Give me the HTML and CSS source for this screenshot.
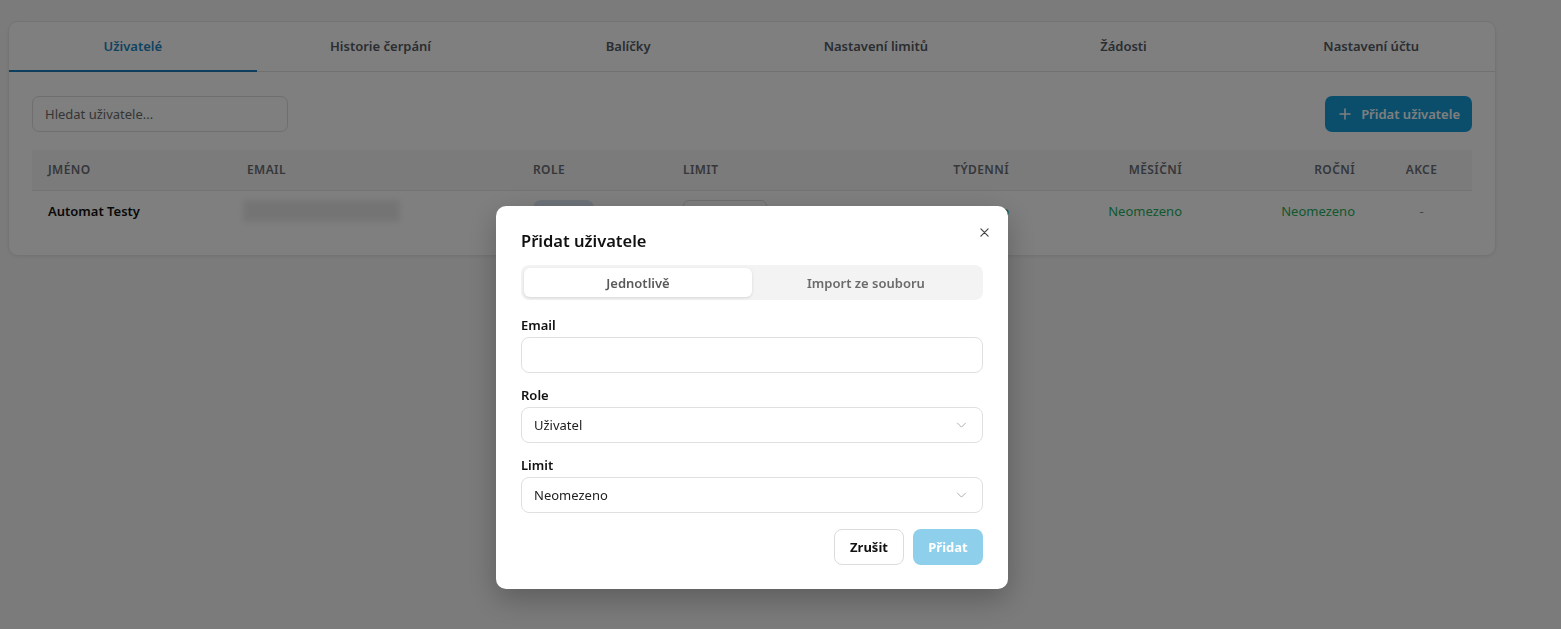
FILE: index.html
```html
<!DOCTYPE html>
<html lang="cs">
<head>
<meta charset="utf-8">
<title>Uživatelé</title>
<link rel="stylesheet" href="styles.css">
</head>
<body>
<div class="page">
  <section class="card">
    <nav class="tabs">
      <a class="tab active">Uživatelé</a>
      <a class="tab">Historie čerpání</a>
      <a class="tab">Balíčky</a>
      <a class="tab">Nastavení limitů</a>
      <a class="tab">Žádosti</a>
      <a class="tab">Nastavení účtu</a>
    </nav>
    <div class="card-body">
      <div class="toolbar">
        <div class="search">Hledat uživatele...</div>
        <button class="btn-primary">
          <svg class="plus" viewBox="0 0 12 12" width="12" height="12"><path d="M6 1v10M1 6h10" stroke="currentColor" stroke-width="1.5" stroke-linecap="round" fill="none"/></svg>
          <span>Přidat uživatele</span>
        </button>
      </div>
      <table class="users">
        <colgroup>
          <col class="c-name"><col class="c-email"><col class="c-role"><col class="c-limit">
          <col class="c-num"><col class="c-num"><col class="c-num"><col class="c-act">
        </colgroup>
        <thead>
          <tr>
            <th>Jméno</th><th>Email</th><th>Role</th><th>Limit</th>
            <th class="r">Týdenní</th><th class="r">Měsíční</th><th class="r">Roční</th><th class="c">Akce</th>
          </tr>
        </thead>
        <tbody>
          <tr>
            <td class="name">Automat Testy</td>
            <td><span class="redacted"></span></td>
            <td><span class="badge">Uživatel</span></td>
            <td><span class="mini-select">Neomezeno</span></td>
            <td class="r ok">Neomezeno</td>
            <td class="r ok">Neomezeno</td>
            <td class="r ok">Neomezeno</td>
            <td class="c dash">-</td>
          </tr>
        </tbody>
      </table>
    </div>
  </section>
</div>

<div class="overlay">
  <div class="modal">
    <div class="modal-head">
      <h2>Přidat uživatele</h2>
      <svg class="close" viewBox="0 0 10 10" width="9" height="9"><path d="M1 1l8 8M9 1l-8 8" stroke="#444" stroke-width="1.3" stroke-linecap="round"/></svg>
    </div>
    <div class="segmented">
      <span class="seg on">Jednotlivě</span>
      <span class="seg">Import ze souboru</span>
    </div>
    <div class="form">
      <div class="field">
        <label>Email</label>
        <div class="control"></div>
      </div>
      <div class="field">
        <label>Role</label>
        <div class="control select">Uživatel
          <svg class="chev" viewBox="0 0 12 7" width="11" height="6"><path d="M1 1l5 5 5-5" stroke="#aaa" stroke-width="1.1" fill="none"/></svg>
        </div>
      </div>
      <div class="field">
        <label>Limit</label>
        <div class="control select">Neomezeno
          <svg class="chev" viewBox="0 0 12 7" width="11" height="6"><path d="M1 1l5 5 5-5" stroke="#aaa" stroke-width="1.1" fill="none"/></svg>
        </div>
      </div>
    </div>
    <div class="actions">
      <button class="btn-ghost">Zrušit</button>
      <button class="btn-disabled">Přidat</button>
    </div>
  </div>
</div>
</body>
</html>
```

FILE: styles.css
```css
* { box-sizing: border-box; }

html, body {
  margin: 0;
  height: 100%;
}

body {
  font-family: "Noto Sans", "Open Sans", sans-serif;
  font-size: 13px;
  color: #111;
  background: #f6f6f6;
}

.page {
  padding: 21px 65px 0 8px;
}

.card {
  background: #fff;
  border: 1px solid #e9e9e9;
  border-radius: 10px;
  box-shadow: 0 1px 3px rgba(0, 0, 0, 0.06);
}

/* tab strip */
.tabs {
  display: grid;
  grid-template-columns: repeat(6, 1fr);
  border-bottom: 1px solid #e2e2e2;
}

.tab {
  height: 50px;
  display: flex;
  align-items: center;
  justify-content: center;
  font-weight: 600;
  font-size: 13px;
  color: #555a63;
  border-bottom: 2px solid transparent;
  margin-bottom: -1px;
}

.tab.active {
  color: #1e86c2;
  border-bottom-color: #1a7db6;
}

.card-body {
  padding: 24px 23px 23px;
}

.toolbar {
  display: flex;
  justify-content: space-between;
  align-items: center;
  margin-bottom: 18px;
}

.search {
  width: 256px;
  height: 36px;
  border: 1px solid #ddd;
  border-radius: 7px;
  padding: 0 12px;
  display: flex;
  align-items: center;
  color: #6b6b6b;
  font-size: 13px;
}

.btn-primary {
  height: 36px;
  padding: 0 12px 0 14px;
  border: none;
  border-radius: 7px;
  background: #169dd9;
  color: #fff;
  font: 600 13px "Noto Sans", "Open Sans", sans-serif;
  white-space: nowrap;
  display: flex;
  align-items: center;
  gap: 10px;
}

/* user table */
.users {
  width: 1440px;
  border-collapse: collapse;
  table-layout: fixed;
}

.c-name { width: 199px; }
.c-email { width: 286px; }
.c-role { width: 150px; }
.c-limit { width: 185px; }
.c-num { width: 173px; }
.c-act { width: 101px; }

.users th {
  height: 40px;
  background: #f7f7f8;
  border-bottom: 1px solid #e6e6e6;
  padding: 0 16px;
  text-align: left;
  font-size: 12px;
  font-weight: 600;
  letter-spacing: 0.4px;
  text-transform: uppercase;
  color: #6b6e75;
}

.users td {
  height: 42px;
  padding: 0 16px;
  vertical-align: middle;
}

.users .r { text-align: right; }
.users .c { text-align: center; }

.name { font-weight: 600; }

.redacted {
  display: block;
  width: 157px;
  height: 22px;
  margin-left: -4px;
  background: #e9e9e9;
  filter: blur(3px);
}

.badge {
  display: block;
  width: 61px;
  height: 22px;
  border-radius: 8px;
  background: #dce6f4;
  color: #2563a8;
  font-size: 12px;
  text-align: center;
  line-height: 28px;
  overflow: hidden;
}

.mini-select {
  display: block;
  width: 84px;
  height: 22px;
  border: 1px solid #ddd;
  border-radius: 6px;
  font-size: 12px;
  line-height: 28px;
  padding-left: 8px;
  overflow: hidden;
  color: #333;
}

.ok { color: #22b05c; }
.dash { color: #888; }

/* dialog */
.overlay {
  position: fixed;
  inset: 0;
  background: rgba(0, 0, 0, 0.5);
  display: flex;
  justify-content: center;
  align-items: flex-start;
  padding: 206px 57px 0 0;
}

.modal {
  width: 512px;
  background: #fff;
  border-radius: 10px;
  padding: 23px 25px 24px;
  box-shadow: 0 10px 30px rgba(0, 0, 0, 0.25);
}

.modal-head {
  display: flex;
  justify-content: space-between;
  align-items: flex-start;
  height: 36px;
}

.modal-head h2 {
  margin: 0;
  font-size: 16.5px;
  font-weight: 600;
  line-height: 24px;
  color: #111;
}

.close {
  margin: -1px -6px 0 0;
}

.segmented {
  display: grid;
  grid-template-columns: 1fr 1fr;
  background: #f3f3f3;
  border-radius: 8px;
  padding: 3px;
  height: 35px;
}

.seg {
  display: flex;
  align-items: center;
  justify-content: center;
  font-weight: 600;
  font-size: 13px;
  color: #6a6a6a;
  border-radius: 6px;
}

.seg.on {
  background: #fff;
  color: #5a5a5a;
  box-shadow: 0 1px 3px rgba(0, 0, 0, 0.12);
}

.form {
  display: flex;
  flex-direction: column;
  gap: 12px;
  margin-top: 15px;
}

.field label {
  display: block;
  font-weight: 600;
  font-size: 13px;
  line-height: 20px;
  margin-bottom: 2px;
}

.control {
  height: 36px;
  border: 1px solid #e0e0e0;
  border-radius: 8px;
  padding: 0 12px;
  display: flex;
  align-items: center;
  justify-content: space-between;
  font-size: 13px;
  color: #222;
}

.chev { margin-right: 3px; }

.actions {
  display: flex;
  justify-content: flex-end;
  gap: 9px;
  margin-top: 16px;
}

.actions button {
  height: 36px;
  width: 70px;
  border-radius: 8px;
  font: 700 13px "Noto Sans", "Open Sans", sans-serif;
}

.btn-ghost {
  background: #fff;
  border: 1px solid #dcdcdc;
  color: #111;
}

.btn-disabled {
  background: #8ecfec;
  border: none;
  color: #fff;
}
```
